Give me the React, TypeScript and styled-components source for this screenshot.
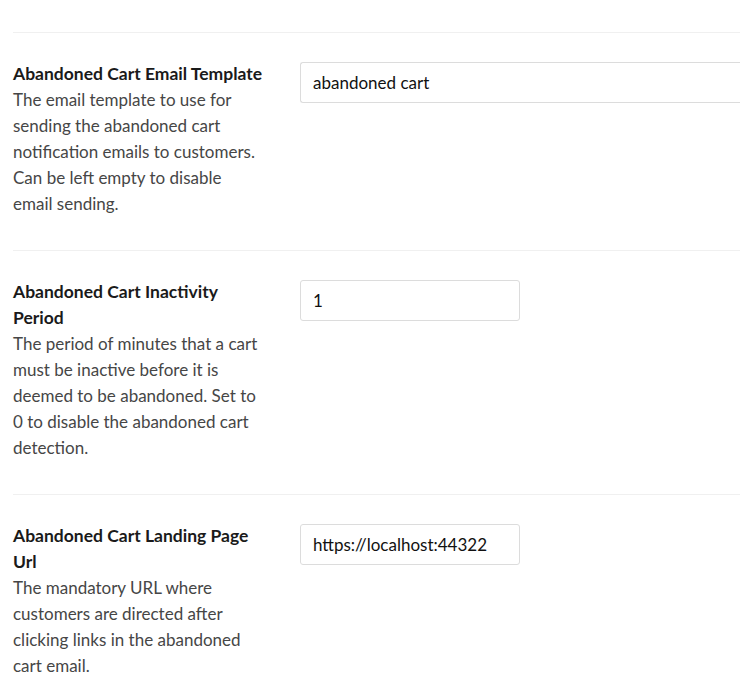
import styled, { createGlobalStyle } from 'styled-components';

const GlobalStyle = createGlobalStyle`
    body {
        margin: 0;
        background-color: white;
        font-family: Lato, 'Noto Sans', sans-serif;
        overflow: hidden;
    }
`;

const Page = styled.div`
    padding: 32px 0 0 13px;
`;

const Setting = styled.section`
    display: grid;
    grid-template-columns: 287px 1fr;
    align-items: start;
    border-top: 1px solid #f0f0f0;
    padding: 28px 0 33px;
`;

const Label = styled.div`
    width: 251px;
    line-height: 26px;
`;

const Title = styled.div`
    font-size: 17.5px;
    font-weight: 700;
    color: #1a1a1a;
`;

const Description = styled.div`
    font-size: 17px;
    color: #464646;
`;

const Input = styled.input<{ $wide?: boolean }>`
    box-sizing: border-box;
    width: ${(p) => (p.$wide ? '100%' : '220px')};
    height: 41px;
    margin-top: 1px;
    padding: 0 12px;
    border: 1px solid #dcdcdc;
    border-right: ${(p) => (p.$wide ? 'none' : '1px solid #dcdcdc')};
    border-radius: ${(p) => (p.$wide ? '3px 0 0 3px' : '3px')};
    font-family: Lato, 'Noto Sans', sans-serif;
    font-size: 17px;
    color: #111;
    background: white;
    outline: none;
`;

const settings = [
    {
        title: 'Abandoned Cart Email Template',
        description:
            'The email template to use for sending the abandoned cart notification emails to customers. Can be left empty to disable email sending.',
        value: 'abandoned cart',
        wide: true,
    },
    {
        title: 'Abandoned Cart Inactivity Period',
        description:
            'The period of minutes that a cart must be inactive before it is deemed to be abandoned. Set to 0 to disable the abandoned cart detection.',
        value: '1',
    },
    {
        title: 'Abandoned Cart Landing Page Url',
        description:
            'The mandatory URL where customers are directed after clicking links in the abandoned cart email.',
        value: 'https://localhost:44322',
    },
];

export default function App() {
    return (
        <>
            <GlobalStyle />
            <Page>
                {settings.map((s) => (
                    <Setting key={s.title}>
                        <Label>
                            <Title>{s.title}</Title>
                            <Description>{s.description}</Description>
                        </Label>
                        <Input $wide={s.wide} defaultValue={s.value} />
                    </Setting>
                ))}
            </Page>
        </>
    );
}
